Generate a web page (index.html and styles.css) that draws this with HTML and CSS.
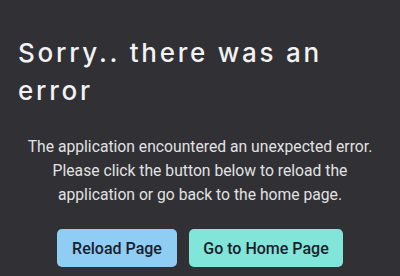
FILE: index.html
```html
<!DOCTYPE html>
<html>
<head>
<meta charset="utf-8">
<link rel="stylesheet" href="styles.css">
</head>
<body>
<main class="page">
  <h1 class="title">Sorry.. there was an error</h1>
  <p class="message">The application encountered an unexpected error. Please click the button below to reload the application or go back to the home page.</p>
  <div class="actions">
    <button class="btn btn-reload">Reload Page</button>
    <button class="btn btn-home">Go to Home Page</button>
  </div>
</main>
</body>
</html>
```

FILE: styles.css
```css
html, body {
  margin: 0;
  padding: 0;
  background: #303035;
  width: 400px;
  height: 276px;
  overflow: hidden;
}
.page {
  padding: 34px 18px 0 18px;
  display: flex;
  flex-direction: column;
}
.title {
  margin: 0;
  font-family: Inter, "DejaVu Sans", sans-serif;
  font-weight: 500;
  font-size: 26px;
  line-height: 38px;
  letter-spacing: 2.75px;
  color: #f2f2f2;
  width: 345px;
}
.message {
  margin: 25px 0 0 0;
  text-align: center;
  font-family: Roboto, sans-serif;
  font-size: 15.7px;
  line-height: 24px;
  color: #e2e2e2;
}
.actions {
  display: flex;
  justify-content: center;
  gap: 12px;
  margin-top: 22px;
}
.btn {
  border: none;
  border-radius: 5px;
  height: 38px;
  padding: 0;
  white-space: nowrap;
  font-family: Roboto, sans-serif;
  font-weight: 500;
  font-size: 16px;
  color: #1a202c;
}
.btn-reload { background: #90cdf4; width: 120px; }
.btn-home { background: #81e6d9; width: 154px; }
```
